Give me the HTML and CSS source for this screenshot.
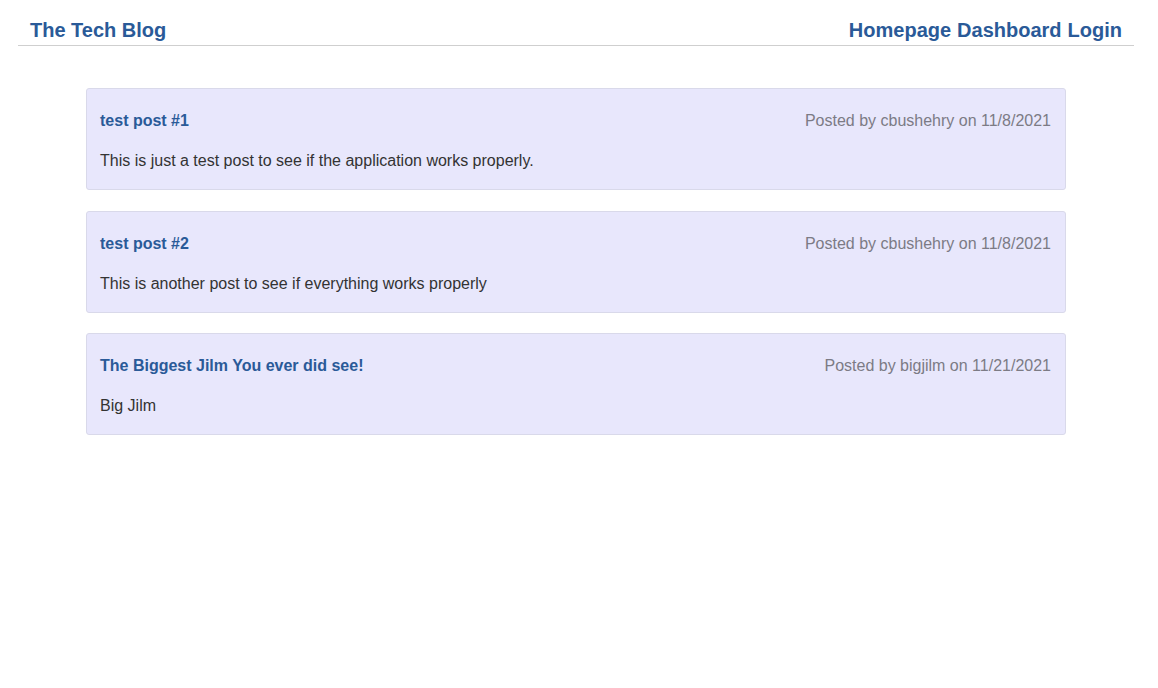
FILE: index.html
```html
<!DOCTYPE html>
<html lang="en">
<head>
<meta charset="utf-8">
<title>The Tech Blog</title>
<link rel="stylesheet" href="styles.css">
</head>
<body>
<header class="site-header">
  <a class="brand" href="#">The Tech Blog</a>
  <nav class="nav">
    <a href="#">Homepage</a>
    <a href="#">Dashboard</a>
    <a href="#">Login</a>
  </nav>
</header>
<main class="posts">
  <article class="post">
    <div class="post-head">
      <a class="post-title" href="#">test post #1</a>
      <span class="post-meta">Posted by cbushehry on 11/8/2021</span>
    </div>
    <p class="post-body">This is just a test post to see if the application works properly.</p>
  </article>
  <article class="post">
    <div class="post-head">
      <a class="post-title" href="#">test post #2</a>
      <span class="post-meta">Posted by cbushehry on 11/8/2021</span>
    </div>
    <p class="post-body">This is another post to see if everything works properly</p>
  </article>
  <article class="post">
    <div class="post-head">
      <a class="post-title" href="#">The Biggest Jilm You ever did see!</a>
      <span class="post-meta">Posted by bigjilm on 11/21/2021</span>
    </div>
    <p class="post-body">Big Jilm</p>
  </article>
</main>
</body>
</html>
```
FILE: styles.css
```css
* { box-sizing: border-box; }
body {
  margin: 0;
  font-family: "Liberation Sans", Arial, sans-serif;
  color: #333;
  background: #fff;
}
a { text-decoration: none; }
.site-header {
  display: flex;
  justify-content: space-between;
  align-items: flex-end;
  margin: 0 24px 0 18px;
  padding: 18px 12px 3px 12px;
  border-bottom: 1px solid #cfcfcf;
}
.brand, .nav a {
  font-size: 20px;
  font-weight: bold;
  color: #2a5a98;
  line-height: 24px;
}
.nav { display: flex; gap: 6px; }
.posts {
  width: 980px;
  margin: 42px 0 0 86px;
  display: flex;
  flex-direction: column;
  gap: 20.5px;
}
.post {
  background: #e8e7fc;
  border: 1px solid #d9d9ea;
  border-radius: 3px;
  padding: 22px 14px 18px 13px;
}
.post-head {
  display: flex;
  justify-content: space-between;
  line-height: 20px;
  font-size: 16px;
}
.post-title {
  font-weight: bold;
  color: #2a5a98;
}
.post-meta { color: #7c7b85; }
.post-body {
  margin: 20px 0 0;
  font-size: 16px;
  line-height: 20px;
  color: #333;
}
```
